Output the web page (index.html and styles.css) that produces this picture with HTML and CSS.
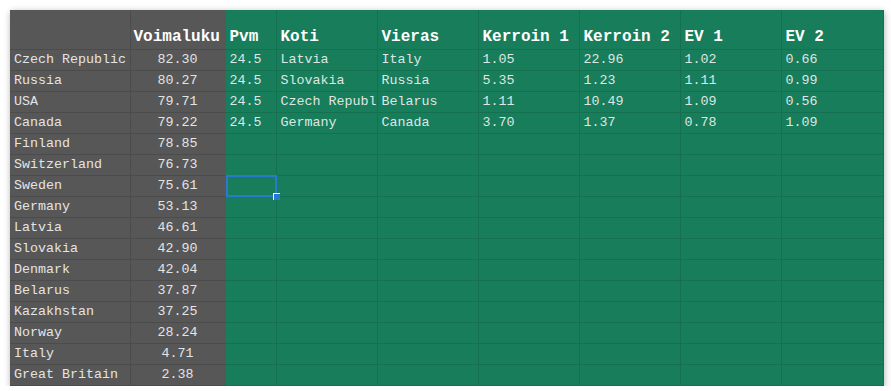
FILE: index.html
```html
<!DOCTYPE html>
<html>
<head>
<meta charset="utf-8">
<link rel="stylesheet" href="styles.css">
</head>
<body>
<div class="sheet">
<table class="grid">
<colgroup>
<col class="w-country"><col class="w-power"><col class="w-date"><col class="w-wide"><col class="w-wide"><col class="w-wide"><col class="w-wide"><col class="w-wide"><col class="w-last">
</colgroup>
<thead>
<tr class="head">
<th class="g"></th><th class="g">Voimaluku</th><th>Pvm</th><th>Koti</th><th>Vieras</th><th>Kerroin 1</th><th>Kerroin 2</th><th>EV 1</th><th>EV 2</th>
</tr>
</thead>
<tbody>
<tr><td class="g">Czech Republic</td><td class="g num">82.30</td><td>24.5</td><td>Latvia</td><td>Italy</td><td>1.05</td><td>22.96</td><td>1.02</td><td>0.66</td></tr>
<tr><td class="g">Russia</td><td class="g num">80.27</td><td>24.5</td><td>Slovakia</td><td>Russia</td><td>5.35</td><td>1.23</td><td>1.11</td><td>0.99</td></tr>
<tr><td class="g">USA</td><td class="g num">79.71</td><td>24.5</td><td>Czech Republic</td><td>Belarus</td><td>1.11</td><td>10.49</td><td>1.09</td><td>0.56</td></tr>
<tr><td class="g">Canada</td><td class="g num">79.22</td><td>24.5</td><td>Germany</td><td>Canada</td><td>3.70</td><td>1.37</td><td>0.78</td><td>1.09</td></tr>
<tr><td class="g">Finland</td><td class="g num">78.85</td><td></td><td></td><td></td><td></td><td></td><td></td><td></td></tr>
<tr><td class="g">Switzerland</td><td class="g num">76.73</td><td></td><td></td><td></td><td></td><td></td><td></td><td></td></tr>
<tr><td class="g">Sweden</td><td class="g num">75.61</td><td class="sel"><span class="selbox"><span class="handle"></span></span></td><td></td><td></td><td></td><td></td><td></td><td></td></tr>
<tr><td class="g">Germany</td><td class="g num">53.13</td><td></td><td></td><td></td><td></td><td></td><td></td><td></td></tr>
<tr><td class="g">Latvia</td><td class="g num">46.61</td><td></td><td></td><td></td><td></td><td></td><td></td><td></td></tr>
<tr><td class="g">Slovakia</td><td class="g num">42.90</td><td></td><td></td><td></td><td></td><td></td><td></td><td></td></tr>
<tr><td class="g">Denmark</td><td class="g num">42.04</td><td></td><td></td><td></td><td></td><td></td><td></td><td></td></tr>
<tr><td class="g">Belarus</td><td class="g num">37.87</td><td></td><td></td><td></td><td></td><td></td><td></td><td></td></tr>
<tr><td class="g">Kazakhstan</td><td class="g num">37.25</td><td></td><td></td><td></td><td></td><td></td><td></td><td></td></tr>
<tr><td class="g">Norway</td><td class="g num">28.24</td><td></td><td></td><td></td><td></td><td></td><td></td><td></td></tr>
<tr><td class="g">Italy</td><td class="g num">4.71</td><td></td><td></td><td></td><td></td><td></td><td></td><td></td></tr>
<tr><td class="g">Great Britain</td><td class="g num">2.38</td><td></td><td></td><td></td><td></td><td></td><td></td><td></td></tr>
</tbody>
</table>
</div>
</body>
</html>
```

FILE: styles.css
```css
html, body {
  margin: 0;
  padding: 0;
  background: #ffffff;
}
body {
  padding: 10px 0 0 10px;
}
.sheet {
  width: 873px;
  box-shadow: 1px 2px 7px rgba(0, 0, 0, 0.35);
}
.grid {
  border-collapse: collapse;
  table-layout: fixed;
  width: 873px;
  font-family: "Liberation Mono", "Courier New", monospace;
  font-size: 13.33px;
  color: #dfe7e3;
}
.w-country { width: 120px; }
.w-power { width: 95px; }
.w-date { width: 51px; }
.w-wide { width: 101px; }
.w-last { width: 102px; }
.grid th,
.grid td {
  background: #177d5b;
  border-right: 1px solid #15704f;
  border-bottom: 1px solid #15704f;
  padding: 0 0 0 4px;
  white-space: nowrap;
  overflow: hidden;
  text-align: left;
}
.grid td {
  height: 20px;
  line-height: 20px;
}
.grid th {
  height: 37px;
  vertical-align: bottom;
  padding-bottom: 2px;
  font-size: 16px;
  font-weight: bold;
  color: #ffffff;
  line-height: 20px;
}
.grid .g {
  background: #575757;
  border-right-color: #4c4c4c;
  border-bottom-color: #4c4c4c;
  color: #e4e4e4;
}
.grid th.g { color: #ffffff; }
.grid tr > :nth-child(2) { border-right-color: #575757; }
.grid .num {
  text-align: center;
  padding-left: 0;
}
.grid th.g:nth-child(2) {
  text-align: left;
  padding-left: 3px;
}
.grid td.sel {
  position: relative;
  padding: 0;
  overflow: visible;
}
.selbox {
  position: absolute;
  left: 0;
  top: -1px;
  right: -1px;
  bottom: -1px;
  border: 2px solid #2b79cf;
}
.handle {
  position: absolute;
  right: -5px;
  bottom: -5px;
  width: 6px;
  height: 6px;
  background: #2b79cf;
  border-left: 1px solid #ffffff;
  border-top: 1px solid #ffffff;
}
```
